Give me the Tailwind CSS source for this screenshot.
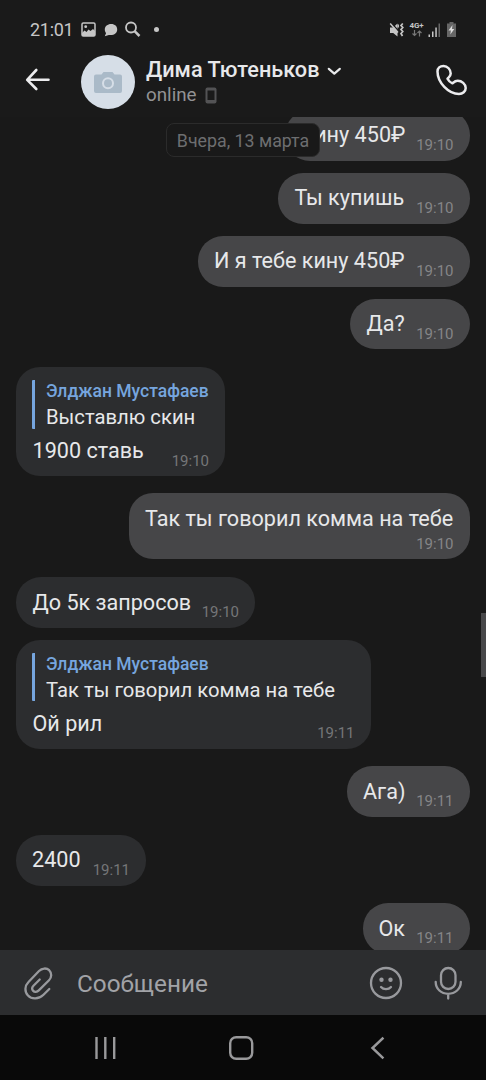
<!DOCTYPE html>
<html lang="ru">
<head>
<meta charset="utf-8">
<meta name="viewport" content="width=device-width, initial-scale=1">
<title>Дима Тютеньков</title>
<script src="https://cdn.jsdelivr.net/npm/@tailwindcss/browser@4"></script>
</head>
<body class="bg-[#191919]">
<div class="relative flex h-[1080px] w-[486px] flex-col overflow-hidden bg-[#191919] font-['Roboto',sans-serif] text-[#e7e8ea]">

  <header class="flex h-[117px] shrink-0 flex-col bg-[#1a1a1a]">
    <div class="flex h-[55px] items-center pt-[4px] pl-[30px] text-[#c6c6c6]">
      <span class="w-[51px] text-[18px] leading-5 tracking-[-0.3px]">21:01</span>
      <svg class="h-[15px] w-[15px]" viewBox="0 0 15 15"><rect x="1" y="1" width="13" height="13" rx="1.3" fill="none" stroke="currentColor" stroke-width="1.5"/><path d="M1 11 3.500 8.500 5.500 10 7.500 7.500 9.500 9 12 7l2 2v5H1z" fill="currentColor"/><circle cx="4.700" cy="4.700" r="1.400" fill="currentColor"/></svg>
      <svg class="ml-[8px] h-[14px] w-[14px]" viewBox="0 0 14 14"><path d="M7.2 1C3.5 1 .8 3.3.8 6.4c0 1.6.6 2.800 1.300 3.600L.8 13.200l4-1.300c5 .8 8.400-2 8.400-5.500C13.200 3.300 10.900 1 7.200 1z" fill="currentColor"/></svg>
      <svg class="ml-[6px] h-[17px] w-[17px]" viewBox="0 0 17 17" fill="none" stroke="currentColor"><circle cx="7" cy="6.500" r="5" stroke-width="1.800"/><path d="m10.600 10.100 4.900 4.900" stroke-width="2.500"/></svg>
      <span class="ml-[13px] size-[5px] rounded-full bg-current"></span>
      <svg class="ml-[230px] h-[16px] w-[16px]" viewBox="0 0 16 16"><path d="M1 5.500h3.200L8.500 1.500v13L4.200 11H1z" fill="currentColor"/><path d="M2.200.800 10 9.500" stroke="#1a1a1a" stroke-width="1.300"/><path d="M1.200 1.600 9 10.500M9.200 2.500v3" stroke="currentColor" stroke-width="1.500"/><path d="m13.800 1.500-1.800 2 1.800 2-1.800 2 1.800 2-1.800 2 1.500 2.500" fill="none" stroke="currentColor" stroke-width="1.700"/></svg>
      <span class="ml-[4px] flex h-[15px] w-[15px] flex-col items-center">
        <span class="text-[8px] leading-[8px] font-bold tracking-[-0.2px]">4G+</span>
        <svg class="h-[7px] w-[10px]" viewBox="0 0 10 7" fill="none" stroke="#777" stroke-width="1.200"><path d="M2.500 0v5.500M.5 3.500l2 2 2-2M7.500 6.500V1M5.500 3l2-2 2 2"/></svg>
      </span>
      <svg class="ml-[4px] h-[14px] w-[13px]" viewBox="0 0 13 14"><path d="M.5 11.500h1.500v2.500H.5zM4 8.500h1.500V14H4zM7.300 4.500h1.500V14H7.300z" fill="currentColor"/><path d="M10.500.5H12V14h-1.500z" fill="#666"/></svg>
      <svg class="ml-[6px] h-[15px] w-[9px]" viewBox="0 0 9 15"><path d="M2.500 0h4v1.500H9V15H0V1.500h2.500z" fill="#666"/><path d="M5.500 3 1.500 8.500h2.400L3.300 12.500l4-5.500H5z" fill="#ddd"/></svg>
    </div>
    <div class="flex h-[54px] items-start pl-[24px]">
      <svg class="mt-[12px] h-[26px] w-[28px]" viewBox="0 0 28 26" fill="none" stroke="#ececee" stroke-width="2.600" stroke-linecap="round" stroke-linejoin="round"><path d="M12.300 3 3.200 12.800l9.100 9.200M3.500 12.800h21"/></svg>
      <div class="ml-[29px] flex size-[54px] items-center justify-center rounded-full bg-[#d6dee7]">
        <svg class="h-[21px] w-[28px]" viewBox="0 0 28 21"><path d="M9.500 0h9l2 2.500H26a2 2 0 0 1 2 2V19a2 2 0 0 1-2 2H2a2 2 0 0 1-2-2V4.500a2 2 0 0 1 2-2h5.500z" fill="#aabac8"/><circle cx="14" cy="11.300" r="5" fill="none" stroke="#d6dee7" stroke-width="2"/></svg>
      </div>
      <div class="ml-[11px] w-[288px]">
        <div class="flex items-center whitespace-nowrap">
          <span class="text-[21.700px] leading-[29px] font-medium">Дима Тютеньков</span>
          <svg class="mt-[3px] ml-[7.500px] h-[9px] w-[15px]" viewBox="0 0 15 9" fill="none" stroke="#e7e8ea" stroke-width="2.200" stroke-linecap="round" stroke-linejoin="round"><path d="m1.800 1.800 5.500 4.800 5.500-4.800"/></svg>
        </div>
        <div class="flex items-center text-[#929294]">
          <span class="text-[18.800px] leading-[22px]">online</span>
          <svg class="ml-[8px] h-[17px] w-[12px]" viewBox="0 0 12 17"><rect x=".5" y=".5" width="11" height="16" rx="2" fill="#535355"/><rect x="2.500" y="3.500" width="7" height="9.500" fill="#1a1a1a"/></svg>
        </div>
      </div>
      <svg class="mt-[9px] ml-[.5px] h-[32px] w-[33px]" viewBox="0 0 33 32" fill="none" stroke="#ececee" stroke-width="2.500" stroke-linejoin="round"><path d="M2.500 7.500C2.500 4 5 2 8.500 2c4 0 7.200 3.500 7.200 7.500 0 3-2.500 4-3.200 5.300 1 2 2.700 3.700 4.900 4.500 1.300-1 2.500-2.600 5.300-2.600 4 0 8 3.300 8 7.300 0 3.500-3 6-6.700 6C13.500 30 2.500 18.500 2.500 7.500z"/></svg>
    </div>
  </header>

  <main class="relative flex h-[833px] shrink-0 flex-col overflow-hidden pr-[16.500px] pl-[16px] text-[21.600px] leading-[26px] whitespace-nowrap">
    <div class="-mt-[7px] flex h-[50.500px] w-[185px] shrink-0 items-end justify-between self-end rounded-[25px] bg-[#464648] px-4">
      <span class="mb-[12.500px]">Кину 450₽</span><span class="mb-[7px] text-[15px] leading-[18px] text-[#858587]">19:10</span>
    </div>
    <div class="mt-[12.500px] flex h-[50.500px] w-[191.500px] shrink-0 items-end justify-between self-end rounded-[25px] bg-[#464648] pr-4 pl-[16.500px]">
      <span class="mb-[12.500px]">Ты купишь</span><span class="mb-[7px] text-[15px] leading-[18px] text-[#858587]">19:10</span>
    </div>
    <div class="mt-[12px] flex h-[51px] w-[272px] shrink-0 items-end justify-between self-end rounded-[25px] bg-[#464648] pr-4 pl-[16.500px]">
      <span class="mb-[12.500px]">И я тебе кину 450₽</span><span class="mb-[7px] text-[15px] leading-[18px] text-[#858587]">19:10</span>
    </div>
    <div class="mt-[12px] flex h-[50.500px] w-[119.500px] shrink-0 items-end justify-between self-end rounded-[25px] bg-[#464648] pr-4 pl-[16.500px]">
      <span class="mb-[12px]">Да?</span><span class="mb-[6px] text-[15px] leading-[18px] text-[#858587]">19:10</span>
    </div>

    <div class="mt-[17.500px] flex h-[109px] w-[209px] shrink-0 flex-col rounded-[24px] bg-[#2c2d2f] px-4 pt-[13.500px]">
      <div class="flex h-[48.500px] flex-col rounded-[1px] border-l-[3px] border-[#76a5de] pl-[11px]">
        <span class="-mt-[2px] text-[17.500px] leading-[26px] font-medium text-[#76a5de]">Элджан Мустафаев</span>
        <span class="text-[20.250px] leading-[27px]">Выставлю скин</span>
      </div>
      <div class="flex flex-1 items-end justify-between"><span class="mb-[12px] pl-[.5px]">1900 ставь</span><span class="mb-[6px] text-[15px] leading-[18px] text-[#757678]">19:10</span></div>
    </div>

    <div class="mt-[17px] flex h-[66.500px] w-[341px] shrink-0 flex-col self-end rounded-[24px] bg-[#464648] pt-[13px] pr-4 pl-[16.500px]">
      <span>Так ты говорил комма на тебе</span><span class="mt-[3px] self-end text-[15px] leading-[18px] text-[#858587]">19:10</span>
    </div>

    <div class="mt-[17.500px] flex h-[51px] w-[239px] shrink-0 items-end justify-between rounded-[25px] bg-[#2c2d2f] pr-4 pl-[16.500px]">
      <span class="mb-[12px]">До 5к запросов</span><span class="mb-[7px] text-[15px] leading-[18px] text-[#757678]">19:10</span>
    </div>

    <div class="mt-[12px] flex h-[109px] w-[354.500px] shrink-0 flex-col rounded-[24px] bg-[#2c2d2f] px-4 pt-[13px]">
      <div class="flex h-[48.500px] flex-col rounded-[1px] border-l-[3px] border-[#76a5de] pl-[11px]">
        <span class="-mt-[2px] text-[17.500px] leading-[26px] font-medium text-[#76a5de]">Элджан Мустафаев</span>
        <span class="text-[20.250px] leading-[27px]">Так ты говорил комма на тебе</span>
      </div>
      <div class="flex flex-1 items-end justify-between"><span class="mb-[12px] pl-[.5px]">Ой рил</span><span class="mb-[7px] text-[15px] leading-[18px] text-[#757678]">19:11</span></div>
    </div>

    <div class="mt-[17.500px] flex h-[51px] w-[122.500px] shrink-0 items-end justify-between self-end rounded-[25px] bg-[#464648] px-4">
      <span class="mb-[12px]">Ага)</span><span class="mb-[7px] text-[15px] leading-[18px] text-[#858587]">19:11</span>
    </div>
    <div class="mt-[18px] flex h-[50.500px] w-[130px] shrink-0 items-end justify-between rounded-[25px] bg-[#2c2d2f] px-4">
      <span class="mb-[12.500px]">2400</span><span class="mb-[7px] text-[15px] leading-[18px] text-[#757678]">19:11</span>
    </div>
    <div class="mt-[17.500px] flex h-[51px] w-[107px] shrink-0 items-end justify-between self-end rounded-[25px] bg-[#464648] px-4">
      <span class="mb-[12px]">Ок</span><span class="mb-[7px] text-[15px] leading-[18px] text-[#858587]">19:11</span>
    </div>

    <div class="absolute top-[6px] left-[166px] flex h-[34px] w-[154px] items-center justify-center rounded-[8px] border border-[#2b2b2b] bg-[#191919] pt-[2px] text-[17.800px] text-[#6d6e70]">Вчера, 13 марта</div>
    <div class="absolute top-[496px] right-0 h-[64px] w-[5px] bg-[#48484a]"></div>
  </main>

  <footer class="flex h-[65px] shrink-0 items-center bg-[#2c2d2f] pl-[22px] text-[#98999d]">
    <svg class="h-[36px] w-[32px]" viewBox="0 0 32 36" fill="none" stroke="currentColor" stroke-width="2.300" stroke-linecap="round" stroke-linejoin="round"><path d="M27.300 24 21.500 29.800C16.500 34.600 9.500 34.300 6 30.500 2.300 26.700 2.700 20.800 6.500 17L17 6C20 3 24.500 2.700 27.200 5.200 30 8 29.800 12.300 27 15.200L16.800 25.400C15 27.200 12.500 27.300 11.200 25.900 9.800 24.400 10 22.200 11.700 20.500L17.700 14.500"/></svg>
    <span class="mt-[2px] ml-[23px] w-[291px] text-[24.300px] leading-8 text-[#a2a3a7]">Сообщение</span>
    <svg class="size-[36px]" viewBox="0 0 36 36" fill="none" stroke="currentColor" stroke-width="2.300" stroke-linecap="round"><circle cx="18" cy="18" r="15"/><path d="M13 22c2.500 2.900 7.500 2.900 10 0"/><circle cx="13.500" cy="14.800" r="2.200" fill="currentColor" stroke="none"/><circle cx="22.500" cy="14.800" r="2.200" fill="currentColor" stroke="none"/></svg>
    <svg class="ml-[28px] h-[36px] w-[32px]" viewBox="0 0 32 36" fill="none" stroke="currentColor" stroke-width="2.300" stroke-linecap="round"><rect x="9" y="3" width="14.500" height="21" rx="7.250"/><path d="M3.700 17c0 7 5.500 11.800 12.500 11.800S28.800 24 28.800 17M16.200 29v4.500"/></svg>
  </footer>

  <nav class="flex h-[65px] shrink-0 items-center bg-[#090909] pl-[94px] text-[#99999b]">
    <svg class="h-[24px] w-[24px]" viewBox="0 0 24 24" stroke="currentColor" stroke-width="2.400"><path d="M2.500 1v22M11.300 1v22M20.200 1v22"/></svg>
    <svg class="ml-[110px] h-[26px] w-[26px]" viewBox="0 0 26 26" fill="none" stroke="currentColor" stroke-width="2.400"><rect x="2.200" y="2.200" width="22" height="21.600" rx="6"/></svg>
    <svg class="ml-[115px] h-[24px] w-[16px]" viewBox="0 0 16 24" fill="none" stroke="currentColor" stroke-width="2.500" stroke-linecap="square"><path d="M13.500 2.500 3.500 12l10 9.500"/></svg>
  </nav>
</div>
</body>
</html>
